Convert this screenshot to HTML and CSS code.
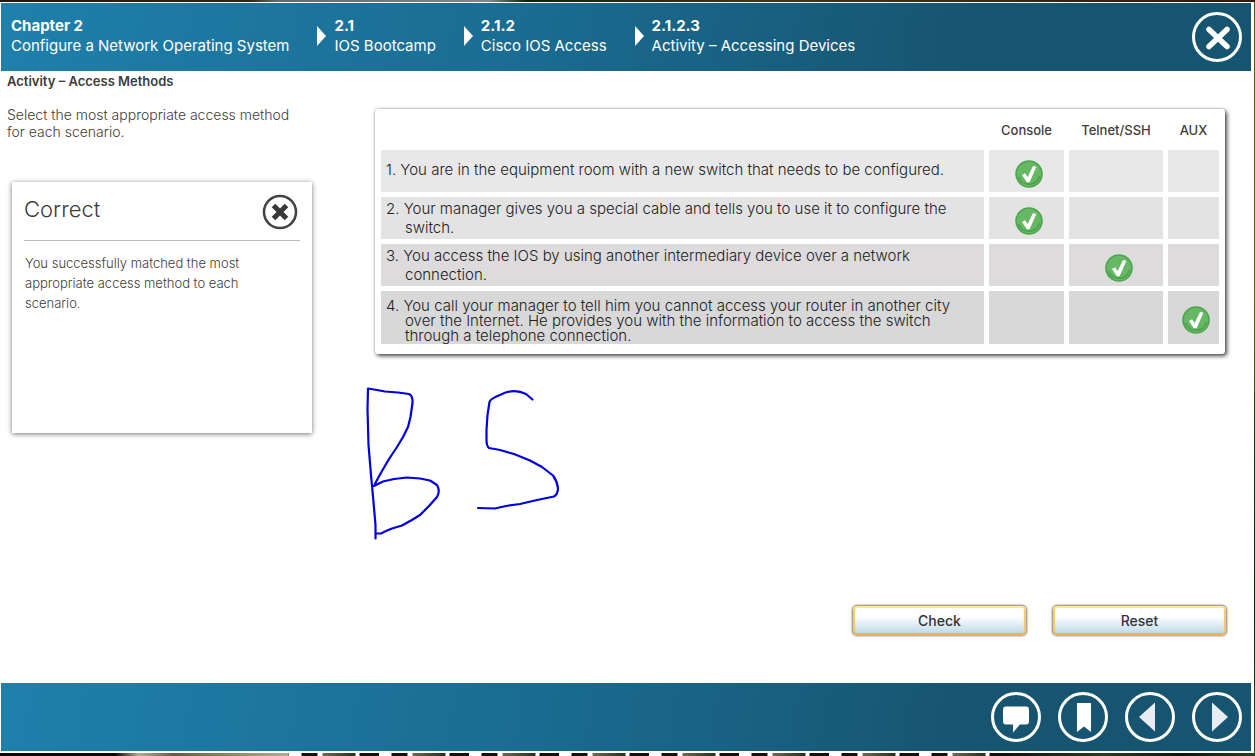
FILE: index.html
```html
<!DOCTYPE html>
<html lang="en">
<head>
<meta charset="utf-8">
<title>Activity – Accessing Devices</title>
<meta name="viewport" content="width=device-width, initial-scale=1">
<link rel="stylesheet" href="styles.css">
</head>
<body>
<svg class="symbols" width="0" height="0" aria-hidden="true">
  <symbol id="check" viewBox="0 0 28 28">
    <circle cx="14" cy="14" r="13" fill="#66b864" stroke="#4ba64c" stroke-width="1.6"/>
    <path d="M3.500 17a11 11 0 0 0 21-1" fill="none" stroke="#4f9f4e" stroke-width="1.6"/>
    <path d="M7 15l3-1.700 2.700 3.700L18 6l3.400.8-6.800 15.400h-2.800z" fill="#fff"/>
  </symbol>
</svg>
<div class="page">
  <header class="bar bar-top">
    <nav aria-label="Breadcrumb">
      <ol class="crumbs">
        <li><a href="#"><b>Chapter 2</b><span>Configure a Network Operating System</span></a></li>
        <li><a href="#"><b>2.1</b><span>IOS Bootcamp</span></a></li>
        <li><a href="#"><b>2.1.2</b><span>Cisco IOS Access</span></a></li>
        <li><a href="#"><b>2.1.2.3</b><span>Activity – Accessing Devices</span></a></li>
      </ol>
    </nav>
    <button class="round" type="button" aria-label="Close">
      <svg width="50" height="50" viewBox="0 0 50 50"><circle cx="25" cy="25" r="23.5" fill="none" stroke="#fff" stroke-width="3"/><path d="M17 17.500l18 17M35 17.500l-18 17" stroke="#fff" stroke-width="5.500" stroke-linecap="round"/></svg>
    </button>
  </header>

  <main class="content">
    <h1>Activity – Access Methods</h1>
    <div class="columns">
      <section class="side">
        <p class="prompt">Select the most appropriate access method for each scenario.</p>
        <section class="feedback">
          <div class="feedback-head">
            <h2>Correct</h2>
            <button class="dismiss" type="button" aria-label="Close feedback">
              <svg width="36" height="36" viewBox="0 0 36 36"><circle cx="18" cy="18" r="16" fill="#fff" stroke="#444" stroke-width="2.600"/><path d="M11.500 11.500l13 13M24.500 11.500l-13 13" stroke="#383838" stroke-width="5"/></svg>
            </button>
          </div>
          <p>You successfully matched the most appropriate access method to each scenario.</p>
        </section>
      </section>
      <section class="work">
        <div class="card">
          <table>
            <colgroup><col><col class="c-console"><col class="c-telnet"><col class="c-aux"></colgroup>
            <thead><tr><td></td><th scope="col">Console</th><th scope="col">Telnet/SSH</th><th scope="col">AUX</th></tr></thead>
            <tbody>
              <tr class="r1"><th scope="row">1. You are in the equipment room with a new switch that needs to be configured.</th><td><svg role="img" aria-label="Correct"><use href="#check"/></svg></td><td></td><td></td></tr>
              <tr class="r2"><th scope="row">2. Your manager gives you a special cable and tells you to use it to configure the switch.</th><td><svg role="img" aria-label="Correct"><use href="#check"/></svg></td><td></td><td></td></tr>
              <tr class="r3"><th scope="row">3. You access the IOS by using another intermediary device over a network connection.</th><td></td><td><svg role="img" aria-label="Correct"><use href="#check"/></svg></td><td></td></tr>
              <tr class="r4"><th scope="row">4. You call your manager to tell him you cannot access your router in another city over the Internet. He provides you with the information to access the switch through a telephone connection.</th><td></td><td></td><td><svg role="img" aria-label="Correct"><use href="#check"/></svg></td></tr>
            </tbody>
          </table>
        </div>
        <div class="actions">
          <button class="action" type="button">Check</button>
          <button class="action" type="button">Reset</button>
        </div>
      </section>
    </div>
    <svg class="ink" viewBox="350 370 230 180" fill="none" stroke="#0000e0" stroke-width="2.200" stroke-linecap="round" stroke-linejoin="round" aria-hidden="true">
      <path d="M368 388.500L367.500 409 368.500 445 371 475 373.500 502 375.500 525V538.500M368 388.500L377 390 385 391.500 398 392.500 409 394Q413 396 412.500 403L410.500 417 408 427 403 437 397 447 389 459 382 471 377 480 374 486 383 481.500 394 479 407 477.500 420 478.500 430 480.500 437 485Q440.500 491 437 497L429 506 420 515 411 520.500 402 525.500 392 528.500 386 531 381 533.500 377 533.500"/>
      <path d="M532.500 399.500L526 394Q514 388 501 394.500 490 399 489.500 402L487.500 415 486.500 430V440Q486.500 446 489 448L500 450 514 454 530 460.500 542 467 553 475.500Q557 481 558 488 558 494 554 496.500L537 500 520 504 506 506 495 508.500 478 508"/>
    </svg>
  </main>

  <footer class="bar bar-bottom">
    <button class="round" type="button" aria-label="Comments">
      <svg width="50" height="50" viewBox="0 0 50 50"><circle cx="25" cy="25" r="23.5" fill="none" stroke="#fff" stroke-width="3"/><path d="M15 14.500h20a3 3 0 0 1 3 3v12a3 3 0 0 1-3 3h-6l-7 8v-8h-7a3 3 0 0 1-3-3v-12a3 3 0 0 1 3-3z" fill="#fff"/></svg>
    </button>
    <button class="round" type="button" aria-label="Bookmark">
      <svg width="50" height="50" viewBox="0 0 50 50"><circle cx="25" cy="25" r="23.5" fill="none" stroke="#fff" stroke-width="3"/><path d="M19 11h14v29l-7-5.500-7 5.500z" fill="#fff"/></svg>
    </button>
    <button class="round" type="button" aria-label="Previous">
      <svg width="50" height="50" viewBox="0 0 50 50"><circle cx="25" cy="25" r="23.5" fill="none" stroke="#fff" stroke-width="3"/><path d="M30 10.500v29L14 25z" fill="#e8ecf3"/></svg>
    </button>
    <button class="round" type="button" aria-label="Next">
      <svg width="50" height="50" viewBox="0 0 50 50"><circle cx="25" cy="25" r="23.5" fill="none" stroke="#fff" stroke-width="3"/><path d="M20 10.500v29L36 25z" fill="#e8ecf3"/></svg>
    </button>
  </footer>
</div>
</body>
</html>
```

FILE: styles.css
```css
* { box-sizing: border-box; }

body {
  margin: 0;
  min-height: 100vh;
  display: flex;
  padding: 2px 1px 3px 0;
  background:
    linear-gradient(90deg, #2a1210, #33251f 20%, #6c6470 22%, #8a8290 39%, #1a1a12 42%, #3a3a20 60%, #2c1a10) top / 100% 2px no-repeat,
    linear-gradient(90deg, #12120a, #2c3a1c 40%, #10140a 70%, #24401a) bottom right / 20% 3px no-repeat,
    repeating-linear-gradient(90deg, #fff 0 12px, #14120a 13px 28px, #fff 29px 33px, #6d6a50 34px, #26301a 66px, #fff 67px 70px, #12110c 71px 90px) bottom right / 77% 3px no-repeat,
    linear-gradient(90deg, #0c0805 0 40%, #b5ac90 48%, #6a5a40 60%, #7a8058 75%, #b5ac90) bottom left / 23% 3px no-repeat,
    linear-gradient(#5e5210, #6b6008 40%, #16300c 60%, #0b1c08 80%, #2b4a1a);
  color: #3c3c3c;
  font-family: Inter, "Liberation Sans", sans-serif;
  font-size: 14px;
}

button { font: inherit; color: inherit; cursor: pointer; }
h1, h2, p, ol { margin: 0; padding: 0; }
.symbols { position: absolute; }

.page {
  flex: 1;
  display: flex;
  flex-direction: column;
  padding: 1px 3px 2px 1px;
  background: #fff;
}

.bar {
  display: flex;
  flex: none;
  min-height: 68px;
  padding: 0 9px;
  align-items: center;
  background: linear-gradient(100deg, #1f80ab, #1a6c92 42%, #17546f 78%, #17546f);
  color: #fff;
}
.bar-top { justify-content: space-between; }
.bar-bottom { justify-content: flex-end; gap: 17px; }

.crumbs { display: flex; gap: 28px; list-style: none; padding: 0 0 2px 1px; }
.crumbs li { display: flex; align-items: center; gap: 8px; }
.crumbs li + li::before {
  content: "";
  border: solid transparent;
  border-width: 10px 0 10px 9px;
  border-left-color: #fff;
}
.crumbs a { display: grid; color: #fff; text-decoration: none; line-height: 20px; font-size: 15px; }

.round { display: block; padding: 0; border: 0; border-radius: 50%; background: none; }
.round svg { display: block; }

.content {
  position: relative;
  flex: 1;
  display: flex;
  flex-direction: column;
  padding: 0 24px 47px 6px;
}
h1 { padding-top: 1px; font-size: 13px; line-height: 18px; font-weight: 600; }

.columns { flex: 1; display: grid; grid-template-columns: 305px 1fr; gap: 63px; }
.prompt { padding: 16px 12px 0 0; line-height: 17px; font-weight: 300; }

.feedback {
  margin: 42px 0 0 5px;
  min-height: 251px;
  padding: 8px 12px;
  background: #fff;
  box-shadow: 0 1px 5px rgba(0, 0, 0, .55);
}
.feedback-head {
  display: flex;
  justify-content: space-between;
  align-items: flex-start;
  height: 51px;
  padding: 4px 2px 0 0;
  border-bottom: 1px solid #bbb;
}
h2 { font-size: 22px; line-height: 30px; font-weight: 300; }
.feedback p { padding: 12px 20px 0 1px; font-size: 13px; line-height: 20px; font-weight: 300; }
.dismiss { padding: 0; border: 0; border-radius: 50%; background: none; }
.dismiss svg { display: block; }

.work { display: flex; flex-direction: column; justify-content: space-between; padding-top: 19px; }
.card {
  margin-right: 2px;
  padding: 0 1px 5px;
  border-radius: 3px;
  background: #fff;
  box-shadow: 2px 2px 4px rgba(0, 0, 0, .7), 0 0 3px rgba(0, 0, 0, .3);
}
table { width: 100%; table-layout: fixed; border-spacing: 5px; }
.c-console { width: 75px; }
.c-telnet { width: 94px; }
.c-aux { width: 51px; }
td, th { padding: 0; font-weight: 400; }
thead th { height: 31px; font-size: 13px; font-weight: 500; white-space: nowrap; }
tbody tr { height: 42px; }
tbody th { padding: 0 28px 0 24px; text-indent: -19px; text-align: left; font-size: 15px; font-weight: 300; line-height: 19px; color: #222; }
tbody td { padding: 5px 0 0 5px; text-align: center; }
tbody td svg { display: block; width: 28px; height: 28px; margin: 0 auto; }
.r1 > * { background: #e8e8e8; }
.r2 > * { background: #e3e3e3; }
.r3 > * { background: #dddbdc; }
.r4 > * { background: #d8d8d8; }
tbody .r4 { height: 53px; }
tbody .r1 th { padding-bottom: 4px; }
tbody .r4 th { padding-top: 5px; line-height: 15px; }

.actions { display: flex; justify-content: flex-end; gap: 25px; }
.action {
  width: 175px;
  height: 31px;
  border: 1px solid #a5a5a5;
  border-bottom-color: #c9b28c;
  border-radius: 5px;
  background: linear-gradient(#fff 35%, #b9d6e8);
  box-shadow: inset 0 2px 1px #fbe88a, inset 0 -2px 1px #e3b55e, inset 2px 0 1px #f2c95f, inset -2px 0 1px #f2c95f, 0 0 1px 1px rgba(150, 140, 120, .4);
  color: #333;
  font-size: 14px;
  font-weight: 500;
}

.ink { position: absolute; left: 349px; top: 299px; width: 230px; height: 180px; pointer-events: none; }
```
